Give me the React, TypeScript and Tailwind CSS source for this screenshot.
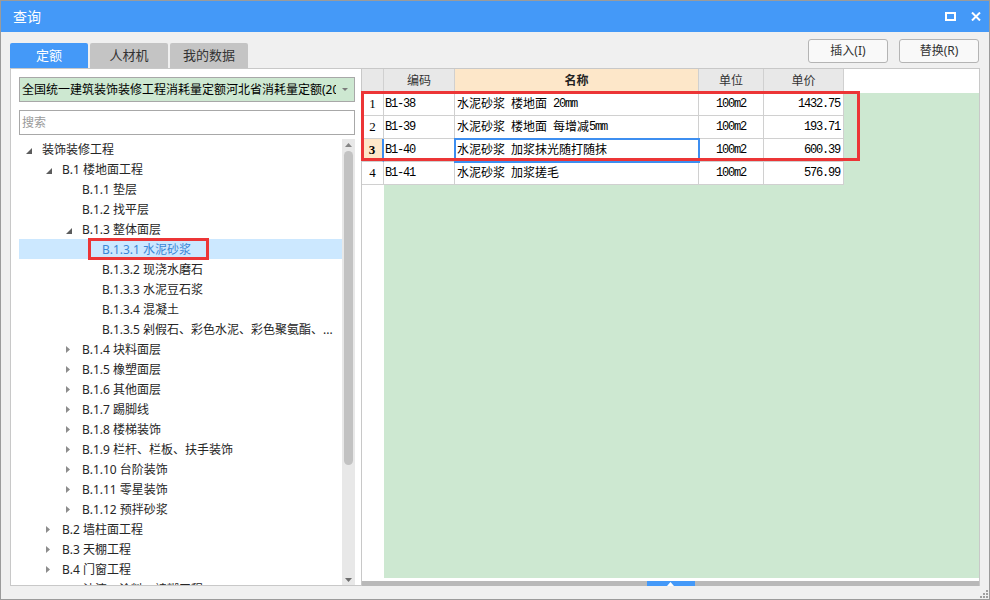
import React from "react";
import clsx from "clsx";

type TreeItem = {
  label: string;
  level: number;
  arrow?: "open" | "closed";
  selected?: boolean;
};

const tree: TreeItem[] = [
  { label: "装饰装修工程", level: 0, arrow: "open" },
  { label: "B.1 楼地面工程", level: 1, arrow: "open" },
  { label: "B.1.1 垫层", level: 2 },
  { label: "B.1.2 找平层", level: 2 },
  { label: "B.1.3 整体面层", level: 2, arrow: "open" },
  { label: "B.1.3.1 水泥砂浆", level: 3, selected: true },
  { label: "B.1.3.2 现浇水磨石", level: 3 },
  { label: "B.1.3.3 水泥豆石浆", level: 3 },
  { label: "B.1.3.4 混凝土", level: 3 },
  { label: "B.1.3.5 剁假石、彩色水泥、彩色聚氨酯、...", level: 3 },
  { label: "B.1.4 块料面层", level: 2, arrow: "closed" },
  { label: "B.1.5 橡塑面层", level: 2, arrow: "closed" },
  { label: "B.1.6 其他面层", level: 2, arrow: "closed" },
  { label: "B.1.7 踢脚线", level: 2, arrow: "closed" },
  { label: "B.1.8 楼梯装饰", level: 2, arrow: "closed" },
  { label: "B.1.9 栏杆、栏板、扶手装饰", level: 2, arrow: "closed" },
  { label: "B.1.10 台阶装饰", level: 2, arrow: "closed" },
  { label: "B.1.11 零星装饰", level: 2, arrow: "closed" },
  { label: "B.1.12 预拌砂浆", level: 2, arrow: "closed" },
  { label: "B.2 墙柱面工程", level: 1, arrow: "closed" },
  { label: "B.3 天棚工程", level: 1, arrow: "closed" },
  { label: "B.4 门窗工程", level: 1, arrow: "closed" },
  { label: "B.5 油漆、涂料、裱糊工程", level: 1, arrow: "closed" },
];

const levelPad = ["pl-[5px]", "pl-[25px]", "pl-[45px]", "pl-[65px]"];

const rows = [
  { no: "1", code: "B1-38", name: "水泥砂浆 楼地面 20mm", unit: "100m2", price: "1432.75" },
  { no: "2", code: "B1-39", name: "水泥砂浆 楼地面 每增减5mm", unit: "100m2", price: "193.71" },
  { no: "3", code: "B1-40", name: "水泥砂浆 加浆抹光随打随抹", unit: "100m2", price: "600.39", active: true },
  { no: "4", code: "B1-41", name: "水泥砂浆 加浆搓毛", unit: "100m2", price: "576.99" },
];

const mono = "font-['Liberation_Mono',monospace] text-[12px] tracking-[-1.2px]";

// ascii bits in the grid render in a narrow mono face, cjk in sans
const mixed = (s: string) =>
  s.split(/([A-Za-z0-9. ]+)/).map((part, i) =>
    /^[A-Za-z0-9. ]+$/.test(part) ? (
      <span key={i} className={clsx(mono, "whitespace-pre")}>
        {part}
      </span>
    ) : (
      <span key={i}>{part}</span>
    )
  );

const OpenArrow = () => (
  <svg width="6" height="6" viewBox="0 0 6 6" className="mt-[1px]">
    <polygon points="6,0 6,6 0,6" fill="#5c5c5c" />
  </svg>
);

const ClosedArrow = () => (
  <svg width="4" height="7" viewBox="0 0 4 7" className="-mt-[2px]">
    <polygon points="0,0 4,3.5 0,7" fill="#8c8c8c" />
  </svg>
);

const TreePanel = () => (
  <div className="w-[352px] shrink-0 border border-[#c8c8c8] bg-white pt-[8px] pl-[8px] pr-[6px] flex flex-col">
    <div className="h-[25px] shrink-0 border border-[#a8a8a8] bg-[#cde8d1] flex items-center">
      <div className="flex-1 overflow-hidden whitespace-nowrap pl-[2px] pt-[1px] text-[12px] text-black">
        全国统一建筑装饰装修工程消耗量定额河北省消耗量定额(2017)
      </div>
      <div className="w-[18px] shrink-0 flex items-center justify-center">
        <svg width="6" height="3" viewBox="0 0 6 3">
          <polygon points="0,0 6,0 3,3" fill="#7a7a7a" />
        </svg>
      </div>
    </div>
    <div className="mt-[8px] h-[25px] shrink-0 border border-[#a8a8a8] bg-white flex items-center pl-[2px] pt-[1px] text-[12px] text-[#9a9a9a]">
      搜索
    </div>
    <div className="mt-[4px] flex-1 flex min-h-0">
      <div className="flex-1 relative overflow-hidden">
        {tree.map((t) => (
          <div
            key={t.label}
            className={clsx(
              "h-[20px] flex items-center whitespace-nowrap text-[12px] pt-[2px]",
              levelPad[t.level],
              t.selected ? "bg-[#cce8ff] text-[#3a86d6]" : "text-[#262626]"
            )}
          >
            <span className="w-[18px] h-full shrink-0 flex items-center pl-[2px]">
              {t.arrow === "open" && <OpenArrow />}
              {t.arrow === "closed" && <ClosedArrow />}
            </span>
            {t.label}
          </div>
        ))}
        <div className="absolute left-[69px] top-[99px] w-[121px] h-[22px] border-[3px] border-[#ec3536]" />
      </div>
      <div className="w-[13px] shrink-0 bg-[#e8e8e8] flex flex-col items-center">
        <div className="h-[12px] pt-[4px]">
          <svg width="7" height="4" viewBox="0 0 7 4" className="block">
            <polygon points="3.5,0 7,4 0,4" fill="#858585" />
          </svg>
        </div>
        <div className="w-[9px] h-[314px] rounded-full bg-[#c2c2c2]" />
        <div className="flex-1" />
        <div className="pb-[3px]">
          <svg width="7" height="4" viewBox="0 0 7 4" className="block">
            <polygon points="0,0 7,0 3.5,4" fill="#6e6e6e" />
          </svg>
        </div>
      </div>
    </div>
  </div>
);

const GridPanel = () => (
  <div className="flex-1 border-t border-r border-[#c8c8c8] bg-white flex flex-col relative text-[12px] text-black">
    <div className="h-[24px] shrink-0 flex text-[#333]">
      <div className="w-[22px] border-r border-b border-[#d0d0d0] bg-[#e8e8e8]" />
      <div className="w-[71px] border-r border-b border-[#d0d0d0] bg-[#e8e8e8] flex items-center justify-center">编码</div>
      <div className="w-[244px] border-r border-b border-[#d0d0d0] bg-[#fde7c9] flex items-center justify-center font-bold text-[#222]">名称</div>
      <div className="w-[65px] border-r border-b border-[#d0d0d0] bg-[#e8e8e8] flex items-center justify-center">单位</div>
      <div className="w-[80px] border-r border-b border-[#d0d0d0] bg-[#e8e8e8] flex items-center justify-center">单价</div>
      <div className="flex-1" />
    </div>
    <div className="flex-1 flex min-h-0">
      <div className="w-[22px] shrink-0 bg-white">
        {rows.map((r) => (
          <div
            key={r.no}
            className={clsx(
              "h-[23px] border-b flex items-center justify-center border-[#d0d0d0] font-['Liberation_Serif',serif] text-[13px]",
              r.active ? "bg-[#fde7c9] font-bold border-r-2 border-r-[#3d8ef0]" : "border-r"
            )}
          >
            {r.no}
          </div>
        ))}
      </div>
      <div className="flex-1 bg-[#cde8d1]">
        {rows.map((r) => (
          <div key={r.no} className="h-[23px] flex">
            <div className={clsx("w-[71px] bg-white border-r border-b border-[#d0d0d0] flex items-center pl-[1px]", mono)}>
              {r.code}
            </div>
            <div
              className={clsx(
                "w-[244px] bg-white border-r border-b border-[#d0d0d0] flex items-center pl-[2px] whitespace-nowrap",
                r.active && "relative z-10 outline-2 outline-[#3d8ef0] -outline-offset-1"
              )}
            >
              {mixed(r.name)}
            </div>
            <div className={clsx("w-[65px] bg-white border-r border-b border-[#d0d0d0] flex items-center justify-center", mono)}>
              {r.unit}
            </div>
            <div className={clsx("w-[80px] bg-white border-r border-b border-[#d0d0d0] flex items-center justify-end pr-[3px]", mono)}>
              {r.price}
            </div>
          </div>
        ))}
      </div>
    </div>
    <div className="h-[3px] shrink-0 bg-white" />
    <div className="h-[5px] shrink-0 bg-[#b9b9b9] flex justify-center">
      <div className="w-[48px] h-full bg-[#4499f8] flex items-center justify-center">
        <svg width="7" height="4" viewBox="0 0 7 4" className="block">
          <polygon points="3.5,0 7,4 0,4" fill="#ffffff" />
        </svg>
      </div>
    </div>
    <div className="absolute left-[-1px] top-[22px] w-[499px] h-[70px] border-[3px] border-[#ec3536] z-20 pointer-events-none" />
  </div>
);

export default function App() {
  return (
    <div className="w-[990px] h-[600px] border border-[#9b9b9b] bg-[#f0f0f0] flex flex-col overflow-hidden font-['Noto_Sans','Noto_Sans_CJK_SC',sans-serif]">
      <div className="h-[31px] shrink-0 bg-[#4499f8] flex items-center pl-[12px] pr-[8px] text-white">
        <span className="text-[14px]">查询</span>
        <div className="ml-auto flex items-center gap-[15px]">
          <svg width="11" height="9" viewBox="0 0 11 9" className="block">
            <rect x="1" y="1" width="9" height="7" fill="none" stroke="#ffffff" strokeWidth="2" />
          </svg>
          <svg width="10" height="9" viewBox="0 0 10 9" className="block">
            <path d="M1 0.5 L9 8.5 M9 0.5 L1 8.5" stroke="#ffffff" strokeWidth="2" />
          </svg>
        </div>
      </div>

      <div className="h-[36px] shrink-0 flex px-[9px]">
        <div className="flex gap-[2px] mt-[11px] h-[25px] text-[13px]">
          <div className="w-[78px] rounded-t-[2px] bg-[#4499f8] text-white flex items-center justify-center">定额</div>
          <div className="w-[78px] rounded-t-[2px] bg-[#c4c4c4] text-[#333] flex items-center justify-center">人材机</div>
          <div className="w-[78px] rounded-t-[2px] bg-[#c4c4c4] text-[#333] flex items-center justify-center">我的数据</div>
        </div>
        <div className="ml-auto flex gap-[11px] mt-[7px] h-[24px] text-[12px] text-[#333] pr-[1px]">
          <button className="w-[80px] border border-[#b4b4b4] rounded-[3px] bg-[#f9f9f9]">插入(I)</button>
          <button className="w-[80px] border border-[#b4b4b4] rounded-[3px] bg-[#f9f9f9]">替换(R)</button>
        </div>
      </div>

      <div className="flex-1 flex px-[9px] min-h-0">
        <TreePanel />
        <GridPanel />
      </div>

      <div className="h-[13px] shrink-0 flex justify-end items-end pr-[1px] pb-[1px]">
        <svg width="8" height="8" viewBox="0 0 8 8" className="block">
          <rect x="6" y="0" width="2" height="2" fill="#a0a0a0" />
          <rect x="3" y="3" width="2" height="2" fill="#a0a0a0" />
          <rect x="6" y="3" width="2" height="2" fill="#a0a0a0" />
          <rect x="0" y="6" width="2" height="2" fill="#a0a0a0" />
          <rect x="3" y="6" width="2" height="2" fill="#a0a0a0" />
          <rect x="6" y="6" width="2" height="2" fill="#a0a0a0" />
        </svg>
      </div>
    </div>
  );
}
